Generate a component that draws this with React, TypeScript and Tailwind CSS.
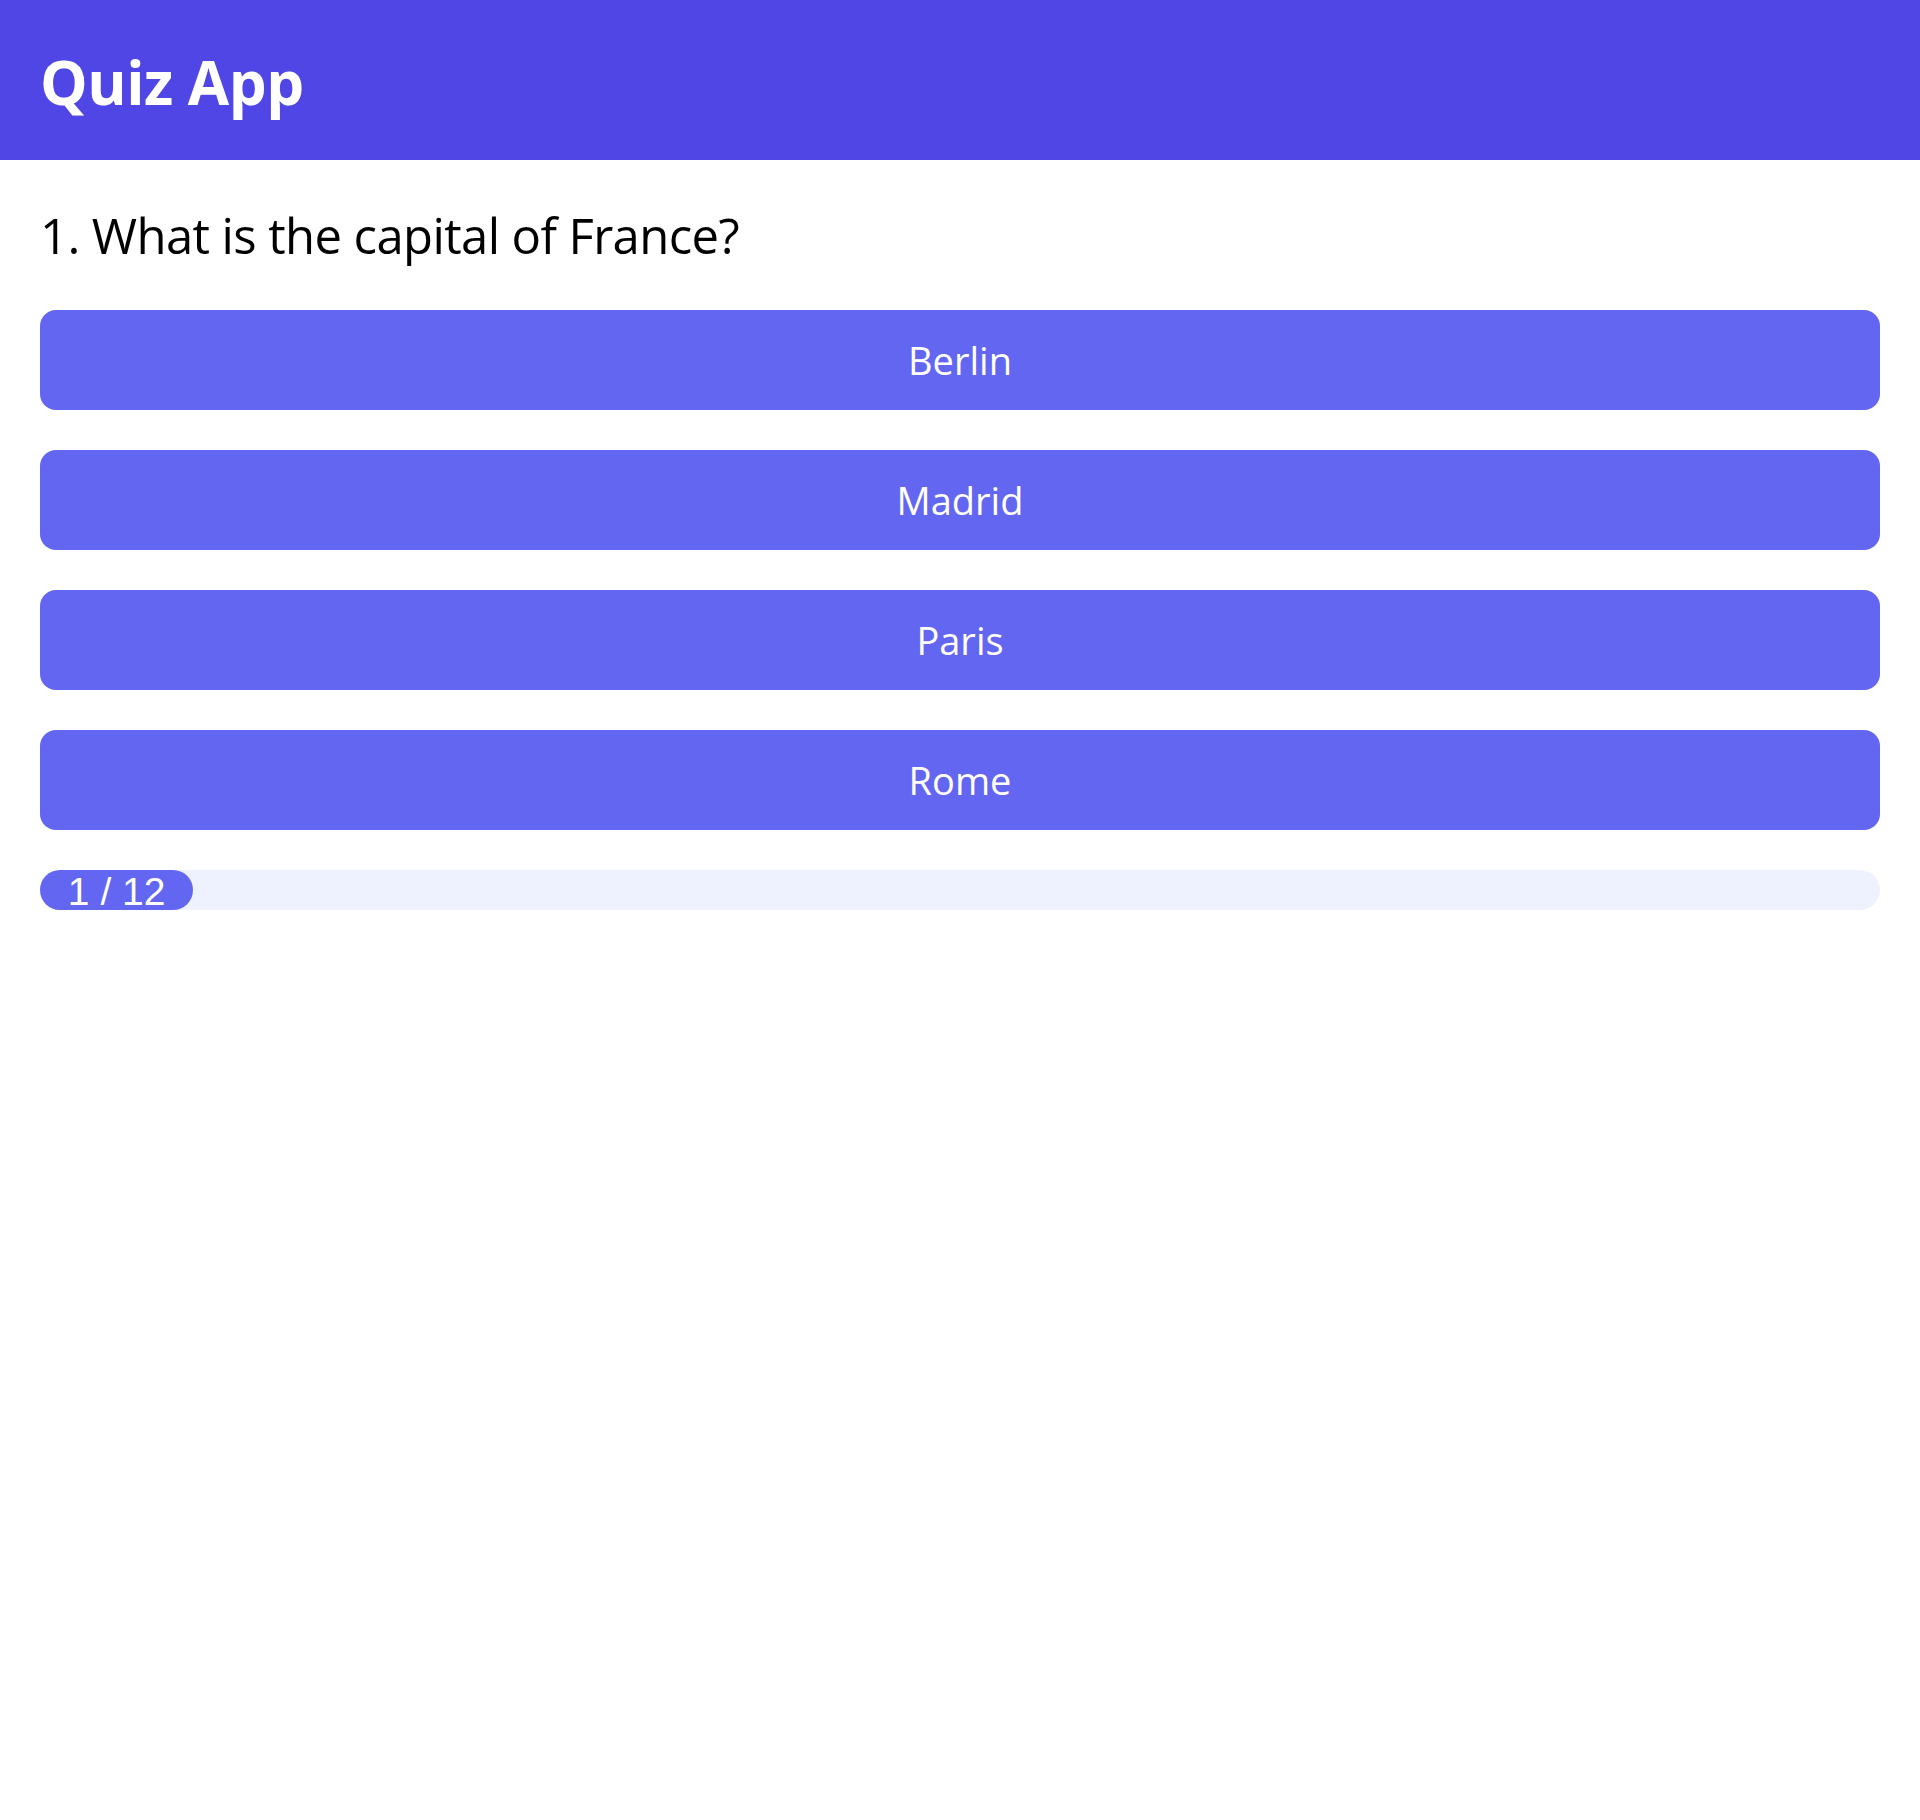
import React from "react";

const options = ["Berlin", "Madrid", "Paris", "Rome"];

export default function App() {
  const current = 1;
  const total = 12;
  return (
    <div className="min-h-[1820px] bg-white" style={{ fontFamily: '"Open Sans", "Noto Sans", sans-serif' }}>
      <header className="h-[160px] bg-[#4f46e5] px-10 flex items-center">
        <h1 className="text-[60px] font-bold text-white leading-none tracking-[-0.5px] pt-[4px]">Quiz App</h1>
      </header>
      <main className="px-10 pt-[44px]">
        <h2 className="text-[49px] leading-[62px] text-black font-normal tracking-[-0.6px]">
          1. What is the capital of France?
        </h2>
        <div className="mt-[44px] flex flex-col gap-10">
          {options.map((o) => (
            <button
              key={o}
              className="h-[100px] w-full rounded-2xl bg-[#6366f1] text-white text-[38px] flex items-center justify-center"
            >
              {o}
            </button>
          ))}
        </div>
        <div className="mt-10 h-10 w-full rounded-full bg-[#eef2ff]">
          <div
            className="h-10 rounded-full bg-[#6366f1] text-white text-center text-[39px] leading-[40px] pt-[2px] whitespace-nowrap"
            style={{ width: `${(current / total) * 100}%`, fontFamily: '"Liberation Sans", Arial, sans-serif' }}
          >
            {current} / {total}
          </div>
        </div>
      </main>
    </div>
  );
}
